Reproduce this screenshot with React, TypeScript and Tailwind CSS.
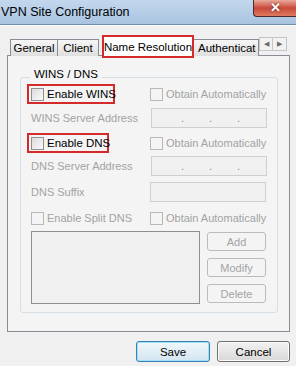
import React from 'react';

const font = "font-['Liberation_Sans',Arial,sans-serif]";

const Check = ({ disabled }: { disabled?: boolean }) => (
  <span
    className={`inline-block w-[13px] h-[13px] shrink-0 border ${
      disabled ? 'border-[#b8b8b8] bg-[#f4f4f4]' : 'border-[#8f8f8f] bg-gradient-to-br from-[#dcdcdc] to-[#fbfbfb]'
    }`}
  />
);

const IpBox = () => (
  <div className="ml-[1px] w-[116px] h-[20px] shrink-0 border border-[#cfcfcf] bg-[#f0f0f0] flex items-end pb-[3px] text-[#8a8a8a] text-[11px] leading-[11px]">
    <span className="w-[29px]" />
    <span className="w-[28px]">.</span>
    <span className="w-[28px]">.</span>
    <span>.</span>
  </div>
);

const SmallBtn = ({ label }: { label: string }) => (
  <div className="w-[59px] h-[19px] border border-[#b9bcbf] rounded-[3px] bg-[#f4f4f4] flex items-center justify-center text-[#a3a3a3]">
    {label}
  </div>
);

const tab = 'h-[17px] mb-[2px] shrink-0 border border-b-0 border-[#898c95] bg-gradient-to-b from-[#f6f6f6] to-[#dfdfdf] flex items-center';

export default function App() {
  return (
    <div className={`w-[296px] h-[366px] bg-[#f0f0f0] overflow-hidden text-[11px] leading-[14px] whitespace-nowrap text-black ${font}`}>
      {/* title bar */}
      <div className="h-[25px] bg-gradient-to-b from-[#c3d8ee] to-[#a9c3df] border-b border-[#6f8fb3] flex justify-between">
        <span className="pt-[5px] pl-[1px] text-[12.5px] leading-[15px] text-black">VPN Site Configuration</span>
        <div className="w-[43px] h-[17px] rounded-bl-[4px] border border-t-0 border-r-0 border-[#4d2a2a] bg-gradient-to-b from-[#e9a99b] via-[#c8483a] to-[#dd7a62] flex items-center justify-center">
          <span className="text-white font-bold text-[13px] leading-[14px] [text-shadow:0_0_2px_#5a1a10]">✕</span>
        </div>
      </div>
      <div className="h-[1px] bg-white" />

      <div className="pl-[7px] pr-[6px] pt-[9px]">
        {/* tabs */}
        <div className="relative z-10 flex items-end h-[23px] -mb-[3px] pl-[3px]">
          <div className={`${tab} w-[48px] justify-center text-[11.5px]`}>General</div>
          <div className={`${tab} w-[41px] border-l-0 justify-center text-[11.5px]`}>Client</div>
          <div className="ml-[3px] w-[92px] h-[23px] shrink-0 border-2 border-[#d42a2a] bg-white flex items-start justify-center pt-[3px] text-[11.5px]">Name Resolution</div>
          <div className={`${tab} w-[65px] border-l-0 overflow-hidden pl-[4px] text-[11.5px]`}>
            <span className="block w-[58px] overflow-hidden">Authenticatio</span>
          </div>
          <div className="flex shrink-0 self-start mt-[2px]">
            <div className="w-[14px] h-[14px] border border-[#c6c6c6] bg-[#f2f2f2] flex items-center justify-center text-[#6a6a6a] text-[7px]">◀</div>
            <div className="w-[14px] h-[14px] border border-l-0 border-[#c6c6c6] bg-[#f2f2f2] flex items-center justify-center text-[#6a6a6a] text-[7px]">▶</div>
          </div>
        </div>

        {/* panel */}
        <div className="h-[277px] border border-[#898c95] bg-[#f4f4f4] pl-[12px] pr-[11px] pt-[21px]">
          <div className="border border-[#d5dfe5] rounded-[3px] pl-[6px] pr-[11px] pb-[8px]">
            <div className="-mt-[11px] ml-[3px] px-[4px] w-fit bg-[#f4f4f4] h-[14px] text-[11.5px]">WINS / DNS</div>

            {/* Enable WINS */}
            <div className="mt-[3px] h-[20px] flex">
              <div className="w-[123px] shrink-0">
                <div className="w-[88px] h-[20px] border-2 border-[#d42a2a] flex items-center pl-[2px] gap-[3px] text-[11.5px]">
                  <Check />
                  <span>Enable WINS</span>
                </div>
              </div>
              <div className="flex items-center gap-[3px] text-[#a3a3a3]">
                <Check disabled />
                <span>Obtain Automatically</span>
              </div>
            </div>

            {/* WINS server */}
            <div className="mt-[4px] h-[20px] flex items-center">
              <div className="w-[123px] shrink-0 pl-[4px] text-[#a3a3a3]">WINS Server Address</div>
              <IpBox />
            </div>

            {/* Enable DNS */}
            <div className="mt-[5px] h-[20px] flex">
              <div className="w-[123px] shrink-0">
                <div className="w-[82px] h-[20px] border-2 border-[#d42a2a] flex items-center pl-[2px] gap-[3px] text-[11.5px]">
                  <Check />
                  <span>Enable DNS</span>
                </div>
              </div>
              <div className="flex items-center gap-[3px] text-[#a3a3a3]">
                <Check disabled />
                <span>Obtain Automatically</span>
              </div>
            </div>

            {/* DNS server */}
            <div className="mt-[3px] h-[20px] flex items-center">
              <div className="w-[123px] shrink-0 pl-[4px] text-[#a3a3a3]">DNS Server Address</div>
              <IpBox />
            </div>

            {/* DNS suffix */}
            <div className="mt-[6px] h-[20px] flex items-center">
              <div className="w-[123px] shrink-0 pl-[4px] text-[#a3a3a3]">DNS Suffix</div>
              <div className="w-[118px] h-[20px] border border-[#cfcfcf] bg-[#f0f0f0]" />
            </div>

            {/* split DNS */}
            <div className="mt-[6px] h-[20px] flex items-center text-[#a3a3a3]">
              <div className="w-[123px] shrink-0 pl-[4px] flex items-center gap-[3px]">
                <Check disabled />
                <span>Enable Split DNS</span>
              </div>
              <div className="flex items-center gap-[3px]">
                <Check disabled />
                <span>Obtain Automatically</span>
              </div>
            </div>

            {/* list + buttons */}
            <div className="mt-[3px] flex pl-[4px] gap-[7px]">
              <div className="w-[171px] h-[73px] border border-[#8e8f8f] bg-[#f0f0f0]" />
              <div className="flex flex-col gap-[7px] pt-[1px]">
                <SmallBtn label="Add" />
                <SmallBtn label="Modify" />
                <SmallBtn label="Delete" />
              </div>
            </div>
          </div>
        </div>

        {/* bottom buttons */}
        <div className="flex justify-end gap-[7px] mt-[9px] text-[11.5px]">
          <div className="w-[74px] h-[21px] rounded-[3px] border border-[#3c7fb1] shadow-[inset_0_0_0_1px_#9ee0f7] bg-gradient-to-b from-[#f0f7fb] to-[#d4e6f1] flex items-center justify-center">Save</div>
          <div className="w-[73px] h-[21px] rounded-[3px] border border-[#707070] shadow-[inset_0_0_0_1px_#fbfbfb] bg-gradient-to-b from-[#f2f2f2] to-[#d8d8d8] flex items-center justify-center">Cancel</div>
        </div>
      </div>
    </div>
  );
}
